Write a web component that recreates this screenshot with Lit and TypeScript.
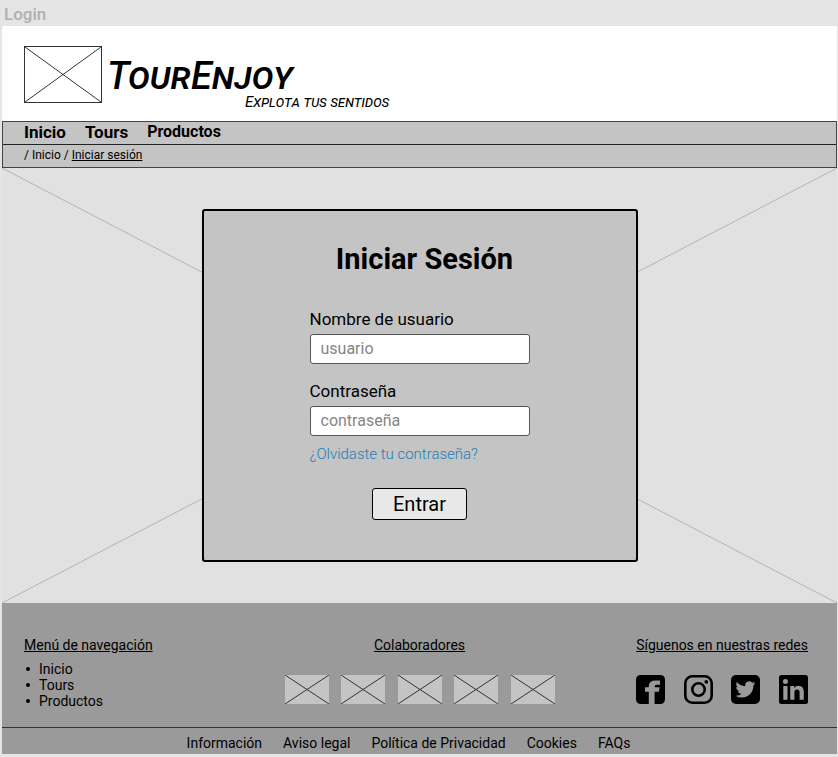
import { LitElement, html, css, svg } from "lit";
import { customElement, property } from "lit/decorators.js";

/** Crossed rectangle that stands in for a picture. */
@customElement("image-placeholder")
class ImagePlaceholder extends LitElement {
  static styles = css`
    :host {
      display: block;
      color: #333;
    }
    .cross {
      display: block;
      width: 100%;
      height: 100%;
    }
    .cross line {
      stroke: currentColor;
      stroke-width: 1px;
      vector-effect: non-scaling-stroke;
    }
  `;
  render() {
    return html`<svg class="cross" viewBox="0 0 100 100" preserveAspectRatio="none" aria-hidden="true">
      <line x1="0" y1="0" x2="100" y2="100"></line>
      <line x1="0" y1="100" x2="100" y2="0"></line>
    </svg>`;
  }
}

const socialShapes: Record<string, unknown> = {
  Facebook: svg`<path fill-rule="evenodd" d="M5 0H24Q29 0 29 5V24Q29 29 24 29H18.6V16.8H23L23.6 12.2H18.6V11.4Q18.6 9.8 20.8 9.8H24V5.4H19.6Q12.8 5.4 12.8 11V12.2H9V16.8H12.8V29H5Q0 29 0 24V5Q0 0 5 0Z"/>`,
  Instagram: svg`<rect x="1.3" y="1.3" width="26.4" height="26.4" rx="7" fill="none" stroke="#000" stroke-width="2.6"/>
    <circle cx="14.5" cy="14.5" r="6.2" fill="none" stroke="#000" stroke-width="2.6"/>
    <circle cx="22.3" cy="6.8" r="1.9"/>`,
  Twitter: svg`<rect width="29" height="29" rx="5"/>
    <path fill="#9a9a9a" transform="translate(4.5 4.5) scale(.83)" d="M23.95 4.57a10 10 0 0 1-2.82.77 4.96 4.96 0 0 0 2.16-2.72c-.95.55-2 .95-3.13 1.18a4.92 4.92 0 0 0-8.38 4.48C7.69 8.1 4.07 6.13 1.64 3.16a4.9 4.9 0 0 0-.67 2.48c0 1.7.87 3.21 2.19 4.1a4.9 4.9 0 0 1-2.23-.62v.06a4.92 4.92 0 0 0 3.95 4.83 5 5 0 0 1-2.21.08 4.94 4.94 0 0 0 4.6 3.42A9.87 9.87 0 0 1 0 19.54a14 14 0 0 0 7.55 2.21c9.05 0 14-7.5 14-13.99 0-.21 0-.42-.02-.63a9.94 9.94 0 0 0 2.46-2.55z"/>`,
  LinkedIn: svg`<rect width="29" height="29" rx="2.5"/>
    <g fill="#9a9a9a"><circle cx="6.4" cy="6.6" r="2.5"/><rect x="4.3" y="11" width="4.2" height="13.8"/>
    <path d="M11.2 11H15.2V12.9Q16.7 10.7 19.5 10.7Q24.8 10.7 24.8 16.8V24.8H20.6V17.7Q20.6 14.4 18.1 14.4Q15.4 14.4 15.4 17.7V24.8H11.2Z"/></g>`,
};

@customElement("social-link")
class SocialLink extends LitElement {
  @property() name = "Facebook";
  static styles = css`
    .link,
    .glyph {
      display: block;
      width: 29px;
      height: 29px;
    }
  `;
  render() {
    return html`<a class="link" href="#" aria-label=${this.name}>
      <svg class="glyph" viewBox="0 0 29 29" aria-hidden="true">${socialShapes[this.name]}</svg>
    </a>`;
  }
}

@customElement("app-root")
class AppRoot extends LitElement {
  static styles = css`
    :host {
      display: flex;
      flex-direction: column;
      box-sizing: border-box;
      min-height: 100vh;
      padding: 0 1px 3px 2px;
      background: #e5e5e5;
      color: #000;
      font: 14px/16px Roboto, "Liberation Sans", sans-serif;
    }
    * {
      box-sizing: border-box;
    }
    a {
      color: inherit;
      text-decoration: none;
    }
    .frame-name {
      padding: 4px 2px 2px;
      font-size: 17px;
      line-height: 20px;
      font-weight: 500;
      color: #b0b0b0;
    }
    .header {
      display: flex;
      align-items: flex-start;
      gap: 5px;
      padding: 20px 22px 0;
      height: 95px;
      background: #fff;
    }
    .logo {
      width: 78px;
      height: 57px;
      border: 1px solid #333;
    }
    .name {
      margin-top: 12px;
      font-size: 38px;
      line-height: 36px;
      font-weight: 500;
    }
    .name,
    .tagline {
      font-family: "Rock Salt", Roboto, cursive;
      font-style: italic;
      font-variant: small-caps;
    }
    .tagline {
      padding-left: 138px;
      font-size: 15px;
      line-height: 16px;
    }
    .bars {
      background: #c4c4c4;
      border: 1px solid #444;
    }
    .nav {
      display: flex;
      align-items: center;
      gap: 19px;
      height: 23px;
      padding: 0 21px 2px;
      border-bottom: 1px solid #222;
      font-size: 17px;
      font-weight: 700;
    }
    .minor {
      font-size: 16px;
    }
    .crumbs {
      height: 22px;
      padding: 2px 21px;
      font-size: 12px;
    }
    .underlined {
      text-decoration: underline;
    }
    .main {
      display: grid;
      flex: 1;
      background: #e1e1e1;
    }
    .backdrop,
    .card {
      grid-area: 1 / 1;
    }
    .backdrop {
      height: 0;
      min-height: 100%;
      color: #b4b4b4;
    }
    .card {
      display: flex;
      flex-direction: column;
      align-items: center;
      place-self: center;
      z-index: 1;
      width: 436px;
      max-width: 100%;
      margin: 41px 0;
      padding: 30px 20px 40px;
      background: #c4c4c4;
      border: 2px solid #000;
      border-radius: 3px;
    }
    .title {
      margin: 0 0 32px;
      padding-left: 10px;
      font-size: 29px;
      line-height: 36px;
      font-weight: 700;
    }
    .fields {
      display: flex;
      flex-direction: column;
      width: 220px;
    }
    .label {
      margin-bottom: 5px;
      font-size: 17px;
      line-height: 20px;
    }
    .input {
      width: 100%;
      height: 30px;
      margin: 0 0 17px;
      padding: 0 10px 2px;
      border: 1px solid #555;
      border-radius: 3px;
      background: #fff;
      font: 16px Roboto, sans-serif;
    }
    .input.last {
      margin-bottom: 8px;
    }
    .input::placeholder {
      color: #858585;
      opacity: 1;
    }
    .forgot {
      font-size: 15px;
      line-height: 20px;
      font-weight: 300;
      color: #1a7fb8;
      white-space: nowrap;
    }
    .submit {
      width: 95px;
      height: 32px;
      margin-top: 24px;
      padding: 0;
      border: 1px solid #000;
      border-radius: 3px;
      background: #e8e8e8;
      color: #000;
      font: 20px Roboto, sans-serif;
    }
    .footer {
      background: #9a9a9a;
    }
    .columns {
      display: grid;
      grid-template-columns: 1fr auto 1fr;
      padding: 34px 22px 18px;
      border-bottom: 1px solid #333;
    }
    .heading {
      margin: 0;
      font-size: 14px;
      line-height: 16px;
      font-weight: 400;
      text-decoration: underline;
    }
    .menu {
      margin: 8px 0 0;
      padding: 0 0 0 2px;
      list-style: none;
    }
    .menu li {
      display: flex;
      align-items: center;
      gap: 9px;
    }
    .menu li::before {
      content: "";
      width: 4px;
      height: 4px;
      border-radius: 50%;
      background: #000;
    }
    .partners {
      width: 270px;
      text-align: center;
    }
    .row {
      display: flex;
      justify-content: space-between;
      margin-top: 22px;
    }
    .partner {
      width: 44px;
      height: 29px;
      background: #c4c4c4;
    }
    .social {
      justify-self: end;
      margin-right: 7px;
    }
    .legal {
      display: flex;
      justify-content: center;
      gap: 21px;
      padding: 7px 22px 3px 0;
    }
  `;

  render() {
    return html`
      <div class="frame-name">Login</div>
      <header class="header">
        <image-placeholder class="logo"></image-placeholder>
        <div>
          <div class="name">TourEnjoy</div>
          <div class="tagline">Explota tus sentidos</div>
        </div>
      </header>
      <div class="bars">
        <nav class="nav">
          <a href="#">Inicio</a><a href="#">Tours</a><a class="minor" href="#">Productos</a>
        </nav>
        <div class="crumbs">/ <a href="#">Inicio</a> / <a class="underlined" href="#">Iniciar sesión</a></div>
      </div>
      <main class="main">
        <image-placeholder class="backdrop"></image-placeholder>
        <form class="card">
          <h1 class="title">Iniciar Sesión</h1>
          <div class="fields">
            <label class="label" for="user">Nombre de usuario</label>
            <input class="input" id="user" type="text" placeholder="usuario" />
            <label class="label" for="pass">Contraseña</label>
            <input class="input last" id="pass" type="password" placeholder="contraseña" />
            <a class="forgot" href="#">¿Olvidaste tu contraseña?</a>
          </div>
          <button class="submit" type="button">Entrar</button>
        </form>
      </main>
      <footer class="footer">
        <div class="columns">
          <section>
            <h2 class="heading">Menú de navegación</h2>
            <ul class="menu">
              ${["Inicio", "Tours", "Productos"].map((t) => html`<li><a href="#">${t}</a></li>`)}
            </ul>
          </section>
          <section class="partners">
            <h2 class="heading">Colaboradores</h2>
            <div class="row">
              ${[1, 2, 3, 4, 5].map(() => html`<image-placeholder class="partner"></image-placeholder>`)}
            </div>
          </section>
          <section class="social">
            <h2 class="heading">Síguenos en nuestras redes</h2>
            <div class="row">
              ${Object.keys(socialShapes).map((n) => html`<social-link name=${n}></social-link>`)}
            </div>
          </section>
        </div>
        <nav class="legal">
          ${["Información", "Aviso legal", "Política de Privacidad", "Cookies", "FAQs"].map(
            (t) => html`<a href="#">${t}</a>`
          )}
        </nav>
      </footer>
    `;
  }
}
